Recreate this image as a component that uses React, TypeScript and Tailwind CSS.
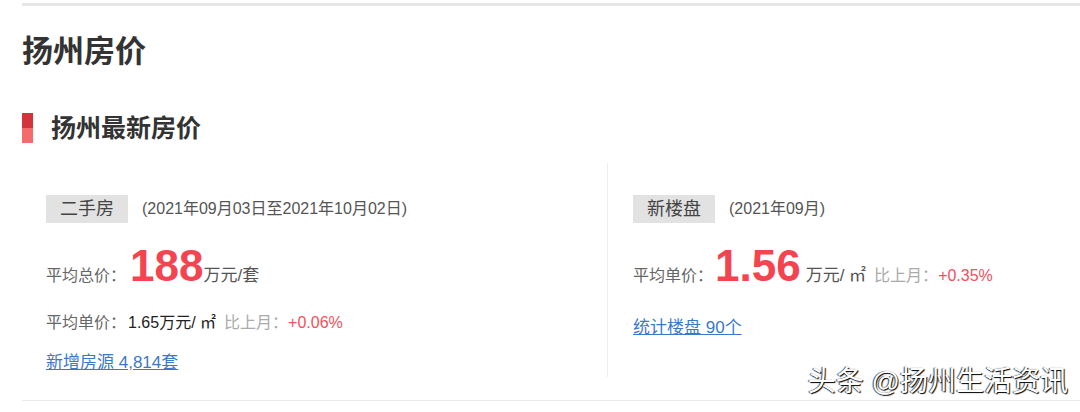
import React from 'react';

const font = "font-['Liberation_Sans','Noto_Sans_CJK_SC',sans-serif]";

const Tag: React.FC<{ label: string; note: string }> = ({ label, note }) => (
  <div className="flex items-center">
    <span className="h-[28px] bg-[#e2e2e2] px-[14px] text-[18px] leading-[28px] text-[#444]">{label}</span>
    <span className="ml-[14px] text-[16px] text-[#555]">{note}</span>
  </div>
);

const App: React.FC = () => {
  return (
    <div className={`relative h-[412px] w-[1080px] overflow-hidden bg-white ${font}`}>
      <div className="ml-[22px] pt-[3px]">
        <div className="h-[3px] bg-[#e6e6e6]" />

        <h1 className="mt-[26px] text-[31px] font-bold leading-[40px] text-[#333]">扬州房价</h1>

        <div className="mt-[41px] flex h-[30px] items-center">
          <div className="flex h-[30px] w-[11px] flex-col">
            <div className="flex-1 bg-[#d3343c]" />
            <div className="flex-1 bg-[#f46a6d]" />
          </div>
          <h2 className="ml-[18px] text-[25px] font-bold leading-[30px] text-[#333]">扬州最新房价</h2>
        </div>

        {/* two panels */}
        <div className="mt-[20px] flex h-[214px]">
          <div className="w-[585px] pl-[24px] pt-[32px]">
            <Tag label="二手房" note="(2021年09月03日至2021年10月02日)" />
            <div className="mt-[21px] flex h-[44px] items-baseline">
              <span className="text-[16px] text-[#666]">平均总价：</span>
              <span className="ml-[4px] text-[44px] font-bold leading-[44px] text-[#f3444f]">188</span>
              <span className="text-[17px] text-[#555]">万元/套</span>
            </div>
            <div className="mt-[24px] flex items-baseline text-[16px] leading-[22px]">
              <span className="text-[#666]">平均单价：</span>
              <span className="ml-[2px] text-[#222]">1.65万元/ ㎡</span>
              <span className="ml-[8px] text-[#aaa]">比上月：</span>
              <span className="text-[#f0515b]">+0.06%</span>
            </div>
            <a href="#" className="mt-[18px] block text-[17px] leading-[22px] text-[#3b78c9] underline">
              新增房源 4,814套
            </a>
          </div>

          <div className="flex-1 border-l border-[#eeeeee] pl-[25px] pt-[32px]">
            <Tag label="新楼盘" note="(2021年09月)" />
            <div className="mt-[21px] flex h-[44px] items-baseline">
              <span className="text-[16px] text-[#666]">平均单价：</span>
              <span className="ml-[2px] text-[44px] font-bold leading-[44px] text-[#f3444f]">1.56</span>
              <span className="ml-[5px] text-[17px] text-[#555]">万元/ ㎡</span>
              <span className="ml-[8px] text-[16px] text-[#aaa]">比上月：</span>
              <span className="text-[16px] text-[#f0515b]">+0.35%</span>
            </div>
            <a href="#" className="mt-[29px] block text-[17px] leading-[22px] text-[#3b78c9] underline">
              统计楼盘 90个
            </a>
          </div>
        </div>

        <div className="mt-[23px] h-px bg-[#ebebeb]" />
      </div>

      {/* watermark */}
      <div className="absolute right-[12px] top-[365px] text-[28px] leading-[34px] text-white [text-shadow:1px_1px_1px_#000,-1px_0_1px_#444]">
        头条 @扬州生活资讯
      </div>
    </div>
  );
};

export default App;
